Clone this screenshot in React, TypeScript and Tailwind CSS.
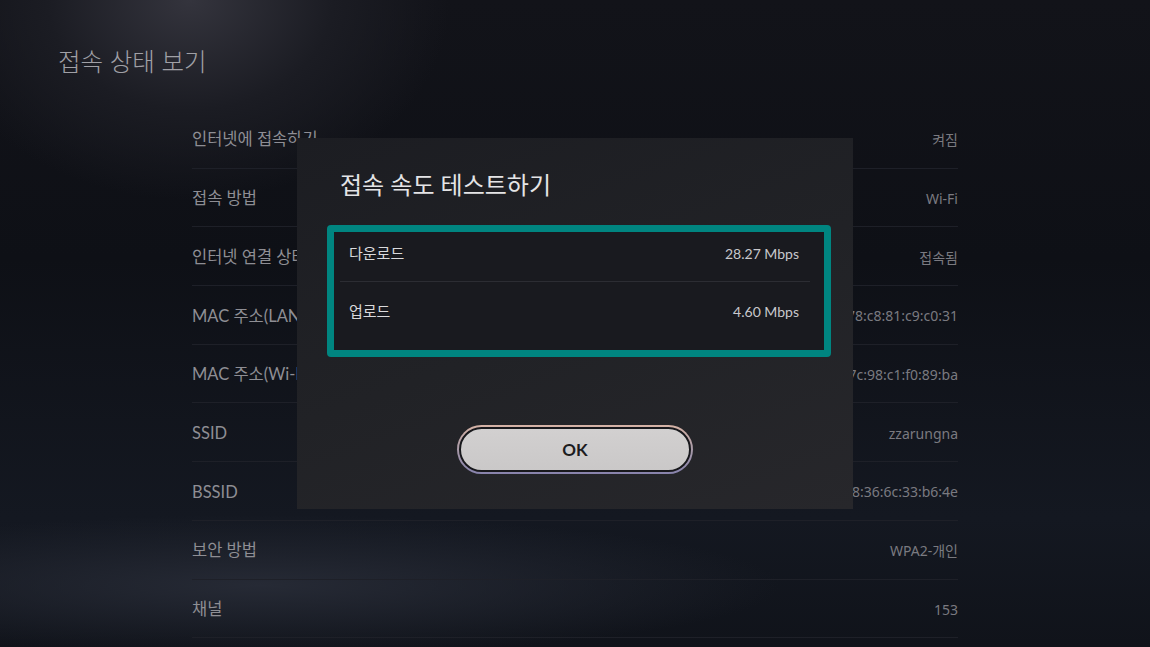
import React from 'react';

const rows = [
  { label: '인터넷에 접속하기', value: '켜짐' },
  { label: '접속 방법', value: 'Wi-Fi' },
  { label: '인터넷 연결 상태', value: '접속됨' },
  { label: 'MAC 주소(LAN)', value: '78:c8:81:c9:c0:31' },
  { label: 'MAC 주소(Wi-Fi)', value: '7c:98:c1:f0:89:ba' },
  { label: 'SSID', value: 'zzarungna' },
  { label: 'BSSID', value: '38:36:6c:33:b6:4e' },
  { label: '보안 방법', value: 'WPA2-개인' },
  { label: '채널', value: '153' },
];

const font = { fontFamily: 'Lato, "Noto Sans CJK KR", sans-serif' };
const valueFont = { fontFamily: '"Noto Sans", "Noto Sans CJK KR", sans-serif' };

const App: React.FC = () => {
  return (
    <div
      className="relative w-[1150px] h-[647px] overflow-hidden bg-[#0d0f14] bg-[radial-gradient(ellipse_260px_200px_at_190px_0px,#34343d_0%,#1b1c23_55%,transparent_100%),radial-gradient(ellipse_520px_70px_at_260px_585px,#262a35_0%,transparent_100%),linear-gradient(180deg,#121319_0%,#0e1016_40%,#141821_80%,#10131a_100%)]"
      style={font}
    >
      {/* page title */}
      <h1 className="pl-[58px] pt-[46px] text-[24.5px] leading-[32px] text-[#a0a0a6] font-light">접속 상태 보기</h1>

      {/* status list */}
      <ul className="ml-[192px] mt-[32px] w-[766px]">
        {rows.map((r) => (
          <li
            key={r.label}
            className="h-[58.7px] pt-[2px] flex items-center justify-between border-b border-[#1e2028]"
          >
            <span className="text-[16.5px] text-[#8e8e94]">{r.label}</span>
            <span className="text-[14px] text-[#7a7a80]" style={valueFont}>{r.value}</span>
          </li>
        ))}
      </ul>

      {/* speed test dialog */}
      <div className="absolute left-[297px] top-[138px] w-[556px] h-[371px] bg-[linear-gradient(160deg,#1c1d22_0%,#212226_50%,#27272b_100%)] flex flex-col">
        <h2 className="pl-[43px] pt-[32px] text-[24px] leading-[30px] text-[#e4e4e6] font-normal">
          접속 속도 테스트하기
        </h2>

        <div className="ml-[30px] mt-[25px] w-[504px] h-[132px] border-[7px] border-[#008580] rounded-[4px] bg-[#191a1f] flex flex-col">
          <div className="h-[49px] pl-[15px] pr-[25px] pb-[7px] flex items-center justify-between">
            <span className="text-[15px] text-[#dadadc]">다운로드</span>
            <span className="text-[14px] text-[#c8c8cc]">28.27 Mbps</span>
          </div>
          <div className="ml-[6px] mr-[14px] h-px bg-[#2c2d33]" />
          <div className="h-[58px] pl-[15px] pr-[25px] flex items-center justify-between">
            <span className="text-[15px] text-[#dadadc]">업로드</span>
            <span className="text-[14px] text-[#c8c8cc]">4.60 Mbps</span>
          </div>
        </div>

        <div className="mt-[68px] self-center w-[236px] h-[49px] rounded-full p-[2px] bg-[linear-gradient(180deg,#d6b3a6_0%,#a89aa8_50%,#8883ad_100%)]">
          <div className="w-full h-full rounded-full border-2 border-[#18181c] bg-[linear-gradient(180deg,#d2d0d0_0%,#cac8c8_100%)] flex items-center justify-center">
            <span className="text-[17px] font-bold text-[#1c1c1e]">OK</span>
          </div>
        </div>
      </div>
    </div>
  );
};

export default App;
